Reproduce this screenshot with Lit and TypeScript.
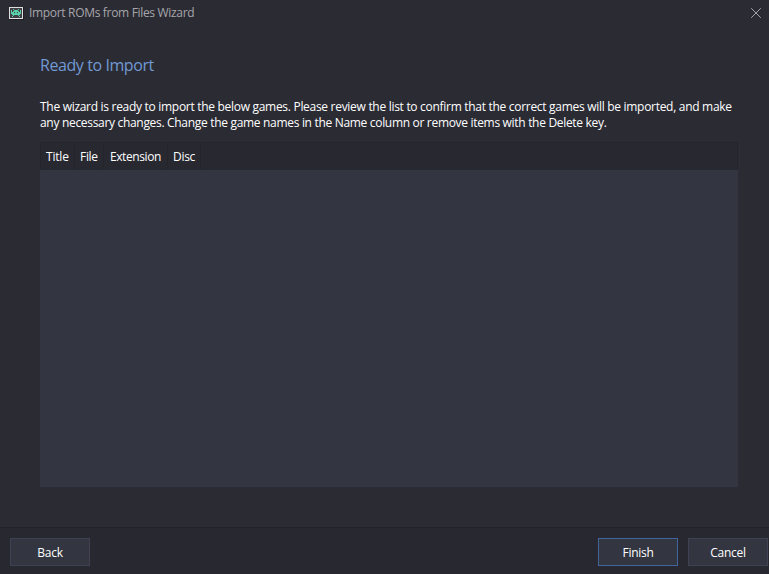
import { LitElement, html, css, svg } from "lit";
import { customElement } from "lit/decorators.js";

const ALIEN = [
  "..#....#..",
  "#..####..#",
  "#.######.#",
  "###.##.###",
  "##########",
  ".########.",
  "..#....#..",
  ".#......#.",
];

@customElement("app-root")
export class AppRoot extends LitElement {
  static styles = css`
    :host {
      display: flex;
      flex-direction: column;
      box-sizing: border-box;
      width: 769px;
      height: 574px;
      overflow: hidden;
      background: #2b2b34;
      color: #fff;
      font: 12px/16px "Open Sans", "Noto Sans", sans-serif;
      white-space: nowrap;
    }
    .titlebar {
      display: flex;
      align-items: center;
      height: 26px;
      flex: none;
      padding: 0 7px 0 8px;
      color: #a6a6aa;
    }
    .titlebar svg { display: block; flex: none; }
    .caption { flex: 1; margin-left: 5px; letter-spacing: -0.32px; }
    main {
      flex: 1;
      display: flex;
      flex-direction: column;
      padding: 27px 31px 40px 40px;
    }
    h1 {
      margin: 0;
      font-size: 16px;
      line-height: 24px;
      font-weight: 400;
      color: #7199d3;
      letter-spacing: -0.42px;
    }
    .intro { margin: 22px 0 11px; }
    .line { display: block; width: max-content; }
    .first { letter-spacing: -0.295px; }
    .second { letter-spacing: -0.312px; }
    .table { flex: 1; display: flex; flex-direction: column; background: #333541; }
    .head {
      display: flex;
      box-sizing: border-box;
      height: 28px;
      background: #282831;
      border: 1px solid #24242c;
      border-bottom: 0;
    }
    .cell {
      box-sizing: border-box;
      padding: 6px 0 0 5px;
      border-right: 1px solid #24242c;
      letter-spacing: -0.3px;
    }
    .title { width: 34px; letter-spacing: -0.2px; }
    .file { width: 29px; }
    .ext { width: 64px; padding-left: 6px; letter-spacing: -0.42px; }
    .disc { width: 33px; }
    footer {
      display: flex;
      box-sizing: border-box;
      height: 47px;
      gap: 10px;
      padding: 10px 1px 0 10px;
      background: #282831;
      border-top: 1px solid #22222a;
    }
    button {
      box-sizing: border-box;
      width: 80px;
      height: 28px;
      padding: 2px 0 0;
      border: 1px solid #404152;
      border-radius: 0;
      background: #333541;
      color: inherit;
      font: inherit;
      letter-spacing: -0.3px;
    }
    .finish { margin-left: auto; border-color: #41659b; }
  `;

  render() {
    return html`
      <div class="titlebar">
        <svg width="16" height="16" viewBox="0 0 16 16" shape-rendering="crispEdges">
          <rect x="1" y="2" width="15" height="13" fill="#1c1c22" />
          <rect x="1.5" y="2.5" width="13" height="11" fill="#404046" stroke="#e0e0e0" />
          <g transform="translate(3 4)" fill="#58cfa6">
            ${ALIEN.flatMap((row, y) =>
              [...row].map((c, x) => (c === "#" ? svg`<rect x=${x} y=${y} width="1" height="1" />` : null))
            )}
          </g>
        </svg>
        <span class="caption">Import ROMs from Files Wizard</span>
        <svg width="12" height="12" viewBox="0 0 12 12">
          <path d="M1.2 1.2 10.8 10.8M10.8 1.2 1.2 10.8" stroke="#a4a4a8" fill="none" />
        </svg>
      </div>
      <main>
        <h1>Ready to Import</h1>
        <div class="intro">
          <span class="line first">The wizard is ready to import the below games. Please review the list to confirm that the correct games will be imported, and make</span>
          <span class="line second">any necessary changes. Change the game names in the Name column or remove items with the Delete key.</span>
        </div>
        <div class="table">
          <div class="head">
            <span class="cell title">Title</span><span class="cell file">File</span><span class="cell ext">Extension</span><span class="cell disc">Disc</span>
          </div>
        </div>
      </main>
      <footer>
        <button>Back</button>
        <button class="finish">Finish</button>
        <button>Cancel</button>
      </footer>
    `;
  }
}
